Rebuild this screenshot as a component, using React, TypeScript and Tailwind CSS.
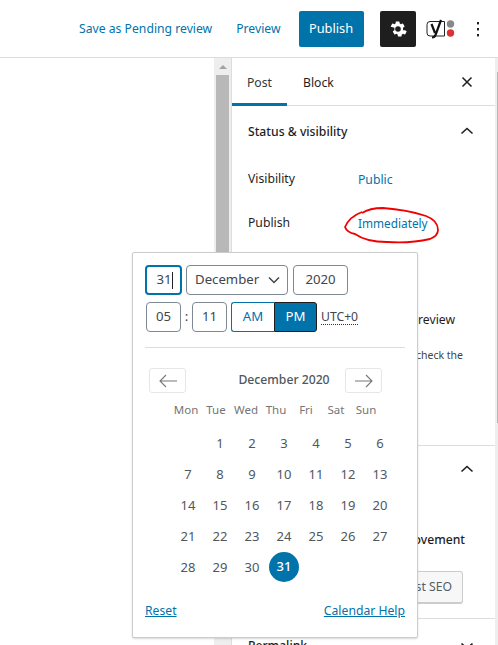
const days: (number | null)[][] = [
  [null, 1, 2, 3, 4, 5, 6],
  [7, 8, 9, 10, 11, 12, 13],
  [14, 15, 16, 17, 18, 19, 20],
  [21, 22, 23, 24, 25, 26, 27],
  [28, 29, 30, 31, null, null, null],
]

const weekdays = ["Mon", "Tue", "Wed", "Thu", "Fri", "Sat", "Sun"]

function Chevron({ up }: { up?: boolean }) {
  return (
    <svg width="24" height="24" viewBox="0 0 24 24" fill="none" stroke="#1e1e1e" strokeWidth="1.6">
      <path d={up ? "M6.5 14.5L12 9.500l5.500 5" : "M6.5 9.5L12 14.500l5.500-5"} />
    </svg>
  )
}

function Arrow({ right }: { right?: boolean }) {
  return (
    <svg width="20" height="14" viewBox="0 0 20 14" fill="none" stroke="#777" strokeWidth="1.1">
      <path d={right ? "M1 7h17M12 1l6 6-6 6" : "M19 7H2M8 1L2 7l6 6"} />
    </svg>
  )
}

function Header() {
  return (
    <header className="h-[58px] shrink-0 flex items-center border-b border-[#ddd] bg-white">
      <span className="ml-[79px] pt-px text-[12.2px] text-[#0073aa]">Save as Pending review</span>
      <span className="ml-[24px] pt-px text-[12.2px] text-[#0073aa]">Preview</span>
      <button className="ml-[18px] w-[65px] h-9 rounded-[2px] bg-[#0073aa] text-white text-[12.8px]">Publish</button>
      <div className="ml-4 w-9 h-9 rounded-[2px] bg-[#1e1e1e] flex items-center justify-center">
        <svg width="24" height="24" viewBox="0 0 24 24" fill="#fff">
          <path d="M19.1 13.2l1.4 1.1c.2.1.2.3.1.5l-1.4 2.4c-.1.2-.3.2-.5.2l-1.7-.6c-.4.3-.8.5-1.2.7l-.3 1.8c0 .2-.2.3-.4.3h-2.8c-.2 0-.3-.1-.4-.3l-.2-1.8c-.4-.2-.8-.4-1.2-.7l-1.7.6c-.2.1-.4 0-.5-.2l-1.4-2.4c-.1-.2-.1-.4.1-.5l1.4-1.1V10.8L4.9 9.7c-.2-.1-.2-.3-.1-.5l1.4-2.4c.1-.2.3-.2.5-.2l1.7.6c.4-.3.8-.5 1.2-.7l.2-1.8c.1-.2.2-.3.4-.3h2.8c.2 0 .4.1.4.3l.3 1.8c.4.2.8.4 1.2.7l1.7-.6c.2-.1.4 0 .5.2l1.4 2.4c.1.2.1.4-.1.5l-1.4 1.1c.1.8.1.6 0 2.4zM12 9.2a2.8 2.8 0 100 5.6 2.8 2.8 0 000-5.6z" />
        </svg>
      </div>
      <svg className="ml-[10px]" width="30" height="20" viewBox="0 0 30 20">
        <path d="M4 2.500h14.500v14.500H4a3 3 0 01-3-3V5.500a3 3 0 013-3z" fill="none" stroke="#222" strokeWidth="1" />
        <path d="M5.500 5l3.500 9M15 1l-5.500 15c-.5 1.500-1.800 2.500-3.500 2.500" fill="none" stroke="#111" strokeWidth="2.200" />
        <circle cx="24.500" cy="5" r="3.700" fill="#888" />
        <circle cx="24.500" cy="14" r="3.700" fill="#dc3232" />
      </svg>
      <svg className="ml-[19px]" width="6" height="18" viewBox="0 0 6 18" fill="#1e1e1e">
        <rect x="2" y="2" width="2" height="2.400" />
        <rect x="2" y="8" width="2" height="2.400" />
        <rect x="2" y="14" width="2" height="2.400" />
      </svg>
    </header>
  )
}

function Sidebar() {
  return (
    <aside className="w-[264px] shrink-0 border-l border-[#ddd] flex flex-col text-[12.2px] leading-[18px] text-[#1e1e1e] overflow-hidden">
      <div className="h-12 shrink-0 flex items-stretch border-b border-[#ddd]">
        <div className="w-[55px] border-b-[3px] border-[#0073aa] -mb-px flex items-center justify-center pt-[4px] text-[#32373c]">Post</div>
        <div className="ml-[16px] flex items-center pt-[2px]">Block</div>
        <svg className="ml-auto mr-[16px] self-center" width="24" height="24" viewBox="0 0 24 24" fill="none" stroke="#1e1e1e" strokeWidth="1.500">
          <path d="M7.500 7.500l9 9M16.500 7.500l-9 9" />
        </svg>
      </div>
      <section className="h-[340px] shrink-0 border-b border-[#ddd]">
        <div className="flex items-center justify-between pl-4 pr-4 pt-[14px] font-medium">
          Status & visibility
          <span className="-mt-px"><Chevron up /></span>
        </div>
        <div className="flex pl-4 mt-[27px]">
          <span className="w-[110px]">Visibility</span>
          <span className="text-[#0073aa] pt-[1px]">Public</span>
        </div>
        <div className="flex pl-4 mt-[25px]">
          <span className="w-[110px]">Publish</span>
          <span className="text-[#0073aa] text-[11.800px]">Immediately</span>
        </div>
        <div className="flex justify-end pr-[40px] mt-[79px]">review</div>
        <div className="flex justify-end pr-[32px] mt-[19px] text-[10.500px] leading-[14px] text-[#444]">check the</div>
      </section>
      <section className="h-[173px] shrink-0 border-b border-[#ddd]">
        <div className="flex justify-end pr-4 pt-[11px]"><Chevron up /></div>
        <div className="flex justify-end pr-[30px] mt-[50px] font-medium">ovement</div>
        <div className="flex justify-end pr-[32px] mt-[22px]">
          <div className="w-[85px] h-[33px] rounded-[3px] border border-[#ccc] border-b-2 bg-[#f7f7f7] flex items-center justify-end pr-[10px] text-[#555d66]">Boost SEO</div>
        </div>
      </section>
      <section className="flex items-center justify-between pl-4 pr-4 pt-[15px] font-medium">
        Permalink
        <Chevron />
      </section>
    </aside>
  )
}

function DatePopover() {
  return (
    <div className="absolute left-[132px] top-[252px] w-[286px] h-[386px] bg-white border border-[#ccc] rounded-[2px] shadow-[0_1px_2px_rgba(0,0,0,0.15)] px-[12px] text-[#40464d] z-10">
      <div className="flex mt-[12px] text-[13.200px]">
        <div className="w-[37px] h-[30px] rounded-[4px] border-2 border-[#0073aa] flex items-center justify-center pl-[2px]">
          31<span className="w-px h-[17px] bg-[#222]" />
        </div>
        <div className="ml-[4px] w-[102px] h-[30px] rounded-[4px] border border-[#7e8993] flex items-center justify-between pl-[8px] pr-[6px]">
          December
          <svg width="14" height="14" viewBox="0 0 14 14" fill="none" stroke="#40464d" strokeWidth="1.500"><path d="M2 4.500l5 5 5-5" /></svg>
        </div>
        <div className="ml-[5px] w-[55px] h-[30px] rounded-[4px] border border-[#7e8993] flex items-center justify-center">2020</div>
      </div>
      <div className="flex items-center mt-[7px] ml-[1px] text-[13.200px]">
        <div className="w-[35px] h-[30px] rounded-[4px] border border-[#7e8993] flex items-center justify-center">05</div>
        <span className="w-[11px] text-center">:</span>
        <div className="w-[35px] h-[30px] rounded-[4px] border border-[#7e8993] flex items-center justify-center">11</div>
        <div className="ml-[4px] w-[43px] h-[30px] rounded-l-[3px] border border-[#0073aa] border-r-0 flex items-center justify-center text-[#0073aa]">AM</div>
        <div className="w-[43px] h-[30px] rounded-r-[3px] border border-[#1e1e1e] bg-[#0073aa] flex items-center justify-center text-white">PM</div>
        <span className="ml-[4px] text-[12.200px] border-b border-dotted border-[#333] leading-[14px]">UTC+0</span>
      </div>
      <div className="h-px bg-[#ddd] mt-[15px]" />
      <div className="flex items-center mt-[20px] ml-[4px]">
        <div className="w-[37px] h-[25px] rounded-[3px] border border-[#e6e6e6] flex items-center justify-center"><Arrow /></div>
        <div className="ml-[52px] w-[92px] text-center text-[12.200px] font-medium whitespace-nowrap text-[#50575e]">December 2020</div>
        <div className="ml-[15px] w-[37px] h-[25px] rounded-[3px] border border-[#e6e6e6] flex items-center justify-center"><Arrow right /></div>
      </div>
      <div className="ml-[26px] w-[210px] grid grid-cols-7 mt-[5px] text-[11.500px] text-[#757575] text-center">
        {weekdays.map((d) => (
          <div key={d} className="h-[24px] leading-[24px] whitespace-nowrap">{d}</div>
        ))}
      </div>
      <div className="ml-[27px] w-[224px] mt-[5px]">
        {days.map((week, i) => (
          <div key={i} className="grid grid-cols-7 h-[31px] text-[13px] text-[#50575e]">
            {week.map((day, j) => (
              <div key={j} className="flex items-center justify-center">
                {day === 31 ? (
                  <span className="w-[30px] h-[30px] rounded-full bg-[#0073aa] text-white font-medium flex items-center justify-center">31</span>
                ) : (
                  <span className="mt-[2px]">{day}</span>
                )}
              </div>
            ))}
          </div>
        ))}
      </div>
      <div className="flex justify-between mt-[20px] text-[12.200px] text-[#0073aa] underline">
        <span>Reset</span>
        <span>Calendar Help</span>
      </div>
    </div>
  )
}

export default function App() {
  return (
    <div className="relative w-[498px] h-[645px] overflow-hidden bg-white flex flex-col font-['Noto_Sans',sans-serif]">
      <Header />
      <div className="flex flex-1 min-h-0">
        <div className="w-[214px] shrink-0" />
        <div className="w-[17px] shrink-0 bg-[#eeeeee] flex flex-col items-center">
          <span className="mt-[7px] w-0 h-0 border-x-[4px] border-x-transparent border-b-[4px] border-b-[#a3a3a3]" />
          <div className="mt-[6px] w-[13px] h-[384px] bg-[#b8b8b8]" />
        </div>
        <Sidebar />
        <div className="flex-1 bg-[#eeeeee] flex justify-end">
          <div className="mt-[14px] w-px h-[351px] bg-[#b8b8b8]" />
        </div>
      </div>
      <svg className="absolute left-[342px] top-[206px]" width="100" height="40" viewBox="0 0 100 40" fill="none" stroke="#f00000" strokeWidth="1.800">
        <path d="M20 6C12 9 6 14 3 21c1 3 5 6 10 7 7 5 19 8 32 8 13 1 30 0 43-3 5-2 8-5 8-9 0-6-4-11-12-14C72 6 55 3 41 2c-9 0-15 1-21 5" />
      </svg>
      <DatePopover />
    </div>
  )
}
